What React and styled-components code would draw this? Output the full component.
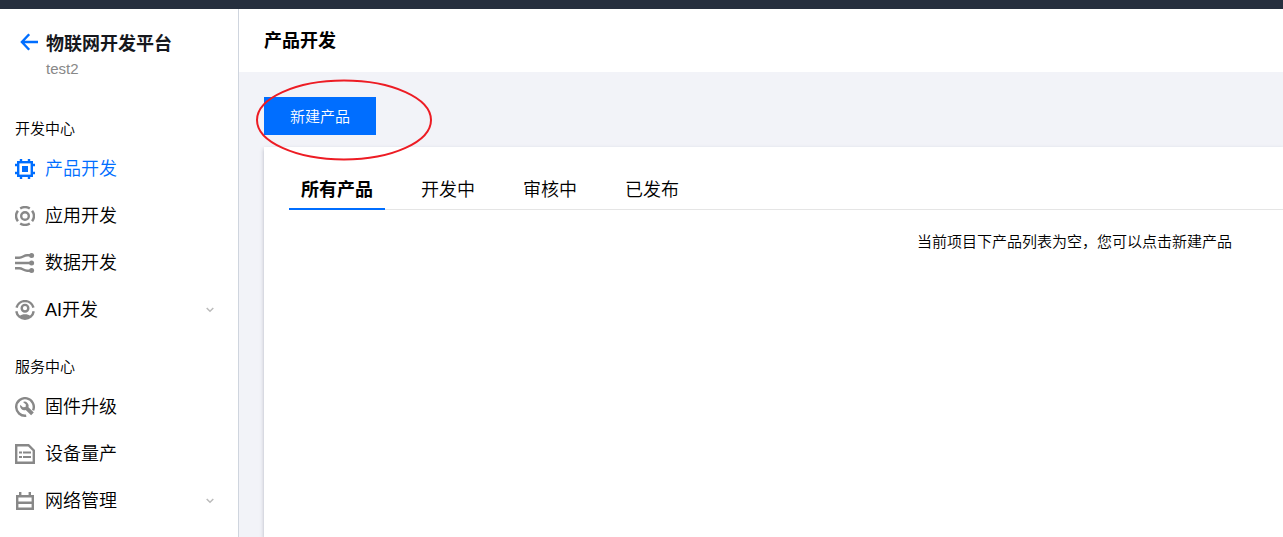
import { useState } from "react";
import styled, { createGlobalStyle } from "styled-components";

const navSections = [
  {
    title: "开发中心",
    items: [
      { name: "产品开发", icon: ChipIcon },
      { name: "应用开发", icon: TargetIcon },
      { name: "数据开发", icon: DataIcon },
      { name: "AI开发", icon: AiIcon, expandable: true },
    ],
  },
  {
    title: "服务中心",
    items: [
      { name: "固件升级", icon: WrenchIcon },
      { name: "设备量产", icon: SheetIcon },
      { name: "网络管理", icon: NetworkIcon, expandable: true },
    ],
  },
];

const tabs = ["所有产品", "开发中", "审核中", "已发布"];

export default function App() {
  const [activeTab, setActiveTab] = useState(tabs[0]);

  return (
    <>
      <GlobalStyle />
      <StyledPage>
        <StyledTopBar />
        <StyledBody>
          <Sidebar active="产品开发" />
          <StyledMain>
            <StyledHeader>
              <StyledHeading>产品开发</StyledHeading>
            </StyledHeader>
            <StyledContent>
              <StyledActions>
                <StyledButton type="button">新建产品</StyledButton>
                <StyledMarker viewBox="0 0 178 82" aria-hidden="true">
                  <ellipse cx="89" cy="41" rx="87" ry="39.5" />
                </StyledMarker>
              </StyledActions>
              <StyledPanel>
                <StyledTabs role="tablist">
                  {tabs.map((tab) => (
                    <StyledTab
                      key={tab}
                      type="button"
                      role="tab"
                      aria-selected={tab === activeTab}
                      $isActive={tab === activeTab}
                      onClick={() => setActiveTab(tab)}
                    >
                      {tab}
                    </StyledTab>
                  ))}
                </StyledTabs>
                <StyledEmpty>
                  当前项目下产品列表为空，您可以点击新建产品
                </StyledEmpty>
              </StyledPanel>
            </StyledContent>
          </StyledMain>
        </StyledBody>
      </StyledPage>
    </>
  );
}

function Sidebar({ active }) {
  return (
    <StyledSidebar>
      <StyledProject>
        <StyledBackLink href="#" aria-label="返回">
          <svg width="18" height="18" viewBox="0 0 18 18" fill="none" stroke="currentColor" strokeWidth="2.4">
            <path d="M9.2 1.2 1.9 9l7.3 7.8M2 9h16" />
          </svg>
        </StyledBackLink>
        <div>
          <StyledProjectTitle>物联网开发平台</StyledProjectTitle>
          <StyledProjectName>test2</StyledProjectName>
        </div>
      </StyledProject>
      <StyledNav>
        {navSections.map(({ title, items }) => (
          <section key={title}>
            <StyledNavTitle>{title}</StyledNavTitle>
            <StyledNavList>
              {items.map(({ name, icon: Icon, expandable }) => (
                <li key={name}>
                  <StyledNavLink href="#" $isActive={name === active}>
                    <StyledIcon $isActive={name === active}>
                      <Icon />
                    </StyledIcon>
                    {name}
                    {expandable && (
                      <StyledChevron viewBox="0 0 8 6">
                        <path d="M0.7 1 4 4.3 7.3 1" />
                      </StyledChevron>
                    )}
                  </StyledNavLink>
                </li>
              ))}
            </StyledNavList>
          </section>
        ))}
      </StyledNav>
    </StyledSidebar>
  );
}

function IconSvg({ children }) {
  return (
    <svg width="20" height="20" viewBox="0 0 20 20" fill="none" stroke="currentColor" strokeWidth="2.4">
      {children}
    </svg>
  );
}

function ChipIcon() {
  return (
    <IconSvg>
      <rect x="3.2" y="3.2" width="13.6" height="13.6" />
      <path d="M6 0v3M14 0v3M6 17v3M14 17v3M0 6h3M0 14h3M17 6h3M17 14h3" />
      <rect x="7" y="7" width="6" height="6" fill="currentColor" stroke="none" />
    </IconSvg>
  );
}

function TargetIcon() {
  return (
    <IconSvg>
      <circle cx="10" cy="10" r="3.8" />
      <path d="M5.2 2.6A8.8 8.8 0 0 1 14.8 2.6M5.2 17.4A8.8 8.8 0 0 0 14.8 17.4" />
      <path d="M2.9 4.8A8.8 8.8 0 0 0 2.9 15.2M17.1 4.8A8.8 8.8 0 0 1 17.1 15.2" />
    </IconSvg>
  );
}

function DataIcon() {
  return (
    <IconSvg>
      <path d="M0 4.8h4.2c3.4 0 4.6-2.5 8-2.5H16M0 10h16M0 15.2h4.2c3.4 0 4.6 2.5 8 2.5H16" />
      <g fill="currentColor" stroke="none">
        <circle cx="16.6" cy="2.5" r="2.5" />
        <circle cx="16.6" cy="10" r="2.5" />
        <circle cx="16.6" cy="17.5" r="2.5" />
      </g>
    </IconSvg>
  );
}

function AiIcon() {
  return (
    <IconSvg>
      <path d="M1.5 7.6A8.8 8.8 0 0 1 18.5 7.6M1.3 11.3A8.8 8.8 0 0 0 18.7 11.3" />
      <circle cx="10" cy="8.2" r="3.3" />
      <path d="M4.5 16.2c2.6-2.6 8.4-2.6 11 0L13 18.5H7z" fill="currentColor" stroke="none" />
    </IconSvg>
  );
}

function WrenchIcon() {
  return (
    <IconSvg>
      <path d="M11.2 18.7A8.8 8.8 0 1 1 18.1 13.4" />
      <path
        d="M8 4.9a4.3 4.3 0 0 1 5.5 5.4l5.3 5.2-2.7 2.8-5.4-5.3a4.3 4.3 0 0 1-5.5-5.3l2.7 2.6 2.7-.4.3-2.4z"
        fill="currentColor"
        stroke="none"
      />
    </IconSvg>
  );
}

function SheetIcon() {
  return (
    <IconSvg>
      <path d="M1.2 1.2h12.3l5.3 5.3v12.3H1.2z" />
      <path d="M4 8.5h3M8 8.5h8M4 13h3M8 13h8" strokeWidth="2" />
    </IconSvg>
  );
}

function NetworkIcon() {
  return (
    <IconSvg>
      <path d="M2.2 5.2h15.6v12.6H2.2zM2 11.8h16M5.2 1v4M14.8 1v4" />
    </IconSvg>
  );
}

const GlobalStyle = createGlobalStyle`
  *,
  *::before,
  *::after {
    box-sizing: border-box;
  }

  body {
    margin: 0;
    color: #000;
    background-color: #f2f3f8;
    font-family: "Liberation Sans", "Noto Sans CJK SC", sans-serif;
    font-size: 15px;
    font-weight: 350;
    line-height: 22px;
  }

  button {
    font: inherit;
  }
`;

const StyledPage = styled.div`
  display: flex;
  flex-direction: column;
  min-height: 100vh;
`;

const StyledTopBar = styled.div`
  height: 9px;
  background-color: #262f3e;
`;

const StyledBody = styled.div`
  display: flex;
  flex: 1;
`;

const StyledSidebar = styled.aside`
  flex: none;
  width: 239px;
  padding-top: 21px;
  background-color: #fff;
  border-right: 1px solid #cfd5de;
`;

const StyledProject = styled.div`
  display: flex;
  align-items: flex-start;
  gap: 8px;
  padding: 0 20px;
  margin-bottom: 38px;
`;

const StyledBackLink = styled.a`
  display: flex;
  align-items: center;
  height: 24px;
  color: #006eff;
`;

const StyledProjectTitle = styled.h2`
  margin: 0;
  color: #16181d;
  font-size: 18px;
  font-weight: 700;
  line-height: 28px;
`;

const StyledProjectName = styled.p`
  margin: 0;
  color: #888;
`;

const StyledNav = styled.nav`
  display: flex;
  flex-direction: column;
  gap: 23px;
`;

const StyledNavTitle = styled.h3`
  margin: 0;
  padding: 0 15px 5px;
  font-size: 15px;
  font-weight: 350;
`;

const StyledNavList = styled.ul`
  margin: 0;
  padding: 0;
  list-style: none;
`;

const StyledNavLink = styled.a`
  display: flex;
  align-items: center;
  gap: 10px;
  height: 47px;
  padding: 0 24px 0 15px;
  color: ${({ $isActive }) => ($isActive ? "#006eff" : "#000")};
  font-size: 18px;
  text-decoration: none;
`;

const StyledIcon = styled.span`
  display: flex;
  color: ${({ $isActive }) => ($isActive ? "#006eff" : "#888")};
`;

const StyledChevron = styled.svg`
  width: 8px;
  height: 6px;
  margin-left: auto;
  fill: none;
  stroke: #bbb;
  stroke-width: 1.5;
`;

const StyledMain = styled.main`
  display: flex;
  flex: 1;
  flex-direction: column;
  min-width: 0;
`;

const StyledHeader = styled.header`
  display: flex;
  align-items: center;
  height: 63px;
  padding: 0 25px;
  background-color: #fff;
`;

const StyledHeading = styled.h1`
  margin: 0;
  font-size: 18px;
  font-weight: 700;
  line-height: 26px;
`;

const StyledContent = styled.div`
  display: flex;
  flex: 1;
  flex-direction: column;
  gap: 12px;
  padding: 25px 0 0 25px;
`;

const StyledActions = styled.div`
  position: relative;
  display: flex;
`;

const StyledButton = styled.button`
  height: 38px;
  padding: 2px 26px 0;
  color: #fff;
  background-color: #006eff;
  border: none;
  cursor: pointer;
`;

const StyledMarker = styled.svg`
  position: absolute;
  top: -18px;
  left: -9px;
  width: 178px;
  height: 82px;
  fill: none;
  stroke: #ed1c24;
  stroke-width: 2;
  pointer-events: none;
`;

const StyledPanel = styled.section`
  flex: 1;
  padding: 22px 0 0 25px;
  background-color: #fff;
  box-shadow: 0 2px 4px rgba(54, 58, 80, 0.32);
`;

const StyledTabs = styled.div`
  display: flex;
  gap: 24px;
  box-shadow: inset 0 -1px #e5e5e5;
`;

const StyledTab = styled.button`
  height: 41px;
  padding: 2px 12px 0;
  color: #000;
  background: none;
  border: none;
  border-bottom: 2px solid ${({ $isActive }) => ($isActive ? "#006eff" : "transparent")};
  font-size: 18px;
  font-weight: ${({ $isActive }) => ($isActive ? 700 : 350)};
  cursor: pointer;
`;

const StyledEmpty = styled.p`
  display: flex;
  justify-content: flex-end;
  margin: 0;
  padding: 21px 51px 21px 0;
`;
